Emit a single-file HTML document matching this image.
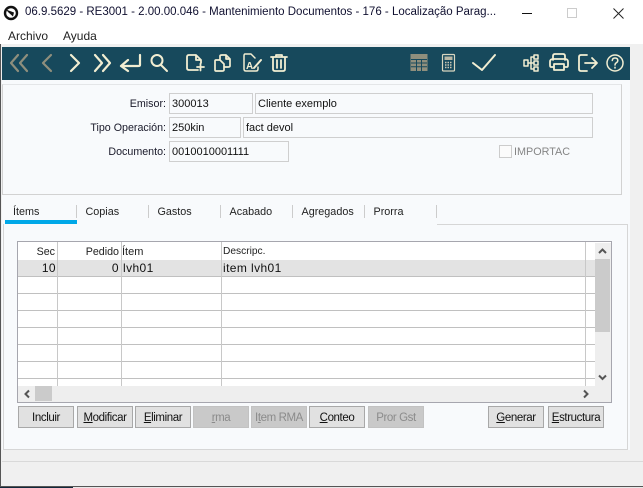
<!DOCTYPE html>
<html><head><meta charset="utf-8">
<style>
html,body{margin:0;padding:0;width:643px;height:488px;overflow:hidden;background:#f0f0f0}
body{position:relative;font-family:"Liberation Sans",sans-serif;font-size:11px;color:#111}
div,span{position:absolute;box-sizing:border-box;white-space:nowrap}
.lbl{text-align:right;width:160px;left:6px;height:14px;line-height:14px;color:#1a1a2a;font-size:10.700px}
.inp{border:1px solid #cfcfcf;background:#f8fafc;height:21px;line-height:21px;padding-left:2px;color:#111}
.tab{top:205px;height:14px;line-height:14px;color:#222;font-size:10.800px}
.sep{top:205px;width:1px;height:13px;background:#ccc}
.h{height:1px;left:18px;width:577px;background:#c0c0c0}
.v{width:1px;top:242px;height:144px;background:#c8c8c8}
.c{height:16px;line-height:16px;color:#111}
.d{font-size:12px;letter-spacing:.4px;line-height:17px}
.btn{top:406px;width:56px;height:22px;border:1px solid #a8a8a8;background:#e1e1e1;text-align:center;line-height:22px;font-size:11.500px;color:#111;letter-spacing:-.4px}
.dis{background:#c9c9c9;border-color:#c2c2c2;color:#8b8b8b}
u{text-decoration:underline}
</style></head><body>
<div style="left:0;top:0;width:643px;height:44px;background:#fff"></div>
<svg style="position:absolute;left:3px;top:5px" width="16" height="16" viewBox="0 0 16 16"><circle cx="8" cy="8" r="6" fill="#fff" stroke="#111" stroke-width="2.400"/><path d="M3 4.500L11 7.500L10 11.500L5 7Z" fill="#111"/></svg>
<div style="left:25px;top:5px;height:15px;line-height:15px;font-size:11.500px;color:#101030">06.9.5629 - RE3001 - 2.00.00.046 - Mantenimiento Documentos - 176 - Localização Parag...</div>
<svg style="position:absolute;left:515px;top:5px" width="115" height="16" viewBox="0 0 115 16"><path d="M7 8.500H17" stroke="#111"/><rect x="52.500" y="3.500" width="9" height="9" fill="none" stroke="#ccc"/><path d="M98.500 3.500L108.500 13.500M108.500 3.500L98.500 13.500" stroke="#222" fill="none"/></svg>
<div style="left:8px;top:29px;height:14px;line-height:14px;font-size:12px;color:#222">Archivo</div>
<div style="left:63px;top:29px;height:14px;line-height:14px;font-size:12px;color:#222">Ayuda</div>

<div style="left:2px;top:47px;width:628px;height:33px;background:#17495c"></div>
<svg style="position:absolute;left:0;top:47px" width="630" height="33" viewBox="0 47 630 33" fill="none" stroke="#f2eed2" stroke-width="2" stroke-linecap="round" stroke-linejoin="round">
<g stroke="#8f8f7d" stroke-width="2.200"><path d="M18 55L11 63L18 71M27 55L20 63L27 71"/><path d="M51 55L43 63L51 71"/></g>
<g stroke-width="2.200"><path d="M71 55L79 63L71 71"/><path d="M95 55L102 63L95 71M103 55L110 63L103 71"/><path d="M140 55V65Q140 66 138 66H122M128 60L121 66L128 71"/></g>
<circle cx="157" cy="60.500" r="5.500"/><path d="M161 65L167 71"/>
<path d="M198 70H189Q187 70 187 68V57Q187 55 189 55H196L201 60V63M196 55V60H201M197 67H204M200.500 63.500V70.500" stroke-width="1.800"/>
<path d="M220 60V56Q220 55 222 55H226L230 59V66Q230 67 228 67H225M226 55V59H230M216 60H220L224 64V70Q224 71 222 71H216Q215 71 215 70V61Q215 60 216 60Z" stroke-width="1.700"/>
<path d="M255 58L251 54H245Q244 54 244 56V69Q244 71 246 71H256Q258 71 258 69V67" stroke-width="1.500"/><text x="246" y="69" font-family="Liberation Sans" font-size="10" font-weight="bold" fill="#f2eed2" stroke="none">A</text><path d="M254 68L261 60" stroke-width="2"/>
<path d="M271 57H287M276 57V55H282V57M273 57V69Q273 71 275 71H283Q285 71 285 69V57M277 60V68M281 60V68" stroke-width="1.800"/>
<rect x="410.500" y="54" width="17" height="17" fill="#8f8f7d" stroke="none"/>
<path d="M411 59.500H427M411 63H427M411 66.700H427M416.500 59.500V71M421.500 59.500V71" stroke="#17495c" stroke-width="1" stroke-linecap="butt"/>
<rect x="442.500" y="54.500" width="12" height="16.500" rx="1" fill="#17495c" stroke="#d8d6c0" stroke-width="1.200"/><rect x="444.500" y="56.500" width="8" height="3.500" fill="#b9b8a6" stroke="none"/>
<path d="M445 62.500H452.500M445 65H452.500M445 67.500H452.500" stroke="#c9c8b4" stroke-width="1.400" stroke-dasharray="1.500 1" stroke-linecap="butt"/>
<path d="M473 63L482 70L495 55" stroke-width="2"/>
<g stroke-width="1.500"><rect x="524" y="60" width="4" height="6"/><rect x="534" y="55" width="4" height="4"/><rect x="534" y="61" width="4" height="4"/><rect x="534" y="67" width="4" height="4"/><path d="M528 63H534M531 57V69M531 57H534M531 69H534"/></g>
<path d="M553 60V56Q553 54 555 54H563Q565 54 565 56V60M553 67H551Q550 67 550 65V62Q550 59 553 59H565Q568 59 568 62V65Q568 67 567 67H565M554 64H564V70H554Z" stroke-width="1.800"/>
<path d="M587 55H581Q579 55 579 57V69Q579 71 581 71H587M585 63H597M592 58L597 63L592 68" stroke-width="1.800"/>
<circle cx="615" cy="63" r="8" stroke-width="1.500"/><path d="M612.300 60.500Q612.500 58 615 58Q617.800 58 617.800 60.500Q617.800 62 616 63Q615 63.700 615 65" stroke-width="1.500"/><path d="M615 67.200V68" stroke-width="1.500"/>
</svg>

<div style="left:2px;top:80px;width:628px;height:370px;background:#f8fafc"></div>
<div style="left:2px;top:84px;width:620px;height:111px;border:1px solid #d2d2d2;border-top-color:#e4e6e8"></div>

<div class="lbl" style="top:97px">Emisor:</div>
<div class="lbl" style="top:121px">Tipo Operación:</div>
<div class="lbl" style="top:145px">Documento:</div>
<div class="inp" style="left:169px;top:93px;width:84px">300013</div>
<div class="inp" style="left:255px;top:93px;width:338px">Cliente exemplo</div>
<div class="inp" style="left:169px;top:117px;width:72px">250kin</div>
<div class="inp" style="left:243px;top:117px;width:350px">fact devol</div>
<div class="inp" style="left:169px;top:141px;width:120px">0010010001111</div>
<div style="left:499px;top:145px;width:13px;height:13px;border:1px solid #ccc;background:#fbfbfb"></div>
<div style="left:514px;top:145px;height:14px;line-height:14px;font-size:10.800px;color:#858585">IMPORTAC</div>

<div class="tab" style="left:13px">Ítems</div>
<div class="tab" style="left:85.500px">Copias</div>
<div class="tab" style="left:157.500px">Gastos</div>
<div class="tab" style="left:229.500px">Acabado</div>
<div class="tab" style="left:301.500px">Agregados</div>
<div class="tab" style="left:373.500px">Prorra</div>
<div class="sep" style="left:76px"></div><div class="sep" style="left:148px"></div><div class="sep" style="left:220px"></div><div class="sep" style="left:292px"></div><div class="sep" style="left:364px"></div><div class="sep" style="left:436px"></div>

<div style="left:3px;top:224px;width:625px;height:226px;border:1px solid #d6d6d6;border-top:0"></div>
<div style="left:437px;top:224px;width:191px;height:1px;background:#d6d6d6"></div>
<div style="left:5px;top:220px;width:72px;height:4px;background:#00a8e8"></div>

<div style="left:17px;top:241px;width:595px;height:162px;border:1px solid #a6a6ae;background:#fff"></div>
<div style="left:18px;top:260px;width:577px;height:16px;background:#e3e3e3"></div>
<div class="h" style="top:276px"></div><div class="h" style="top:293px"></div><div class="h" style="top:310px"></div><div class="h" style="top:327px"></div><div class="h" style="top:344px"></div><div class="h" style="top:361px"></div><div class="h" style="top:378px"></div>
<div class="v" style="left:57px"></div><div class="v" style="left:121px"></div><div class="v" style="left:221px"></div><div class="v" style="left:585px"></div>
<div class="c" style="left:18px;width:37px;top:244px;text-align:right;color:#222;font-size:10.700px">Sec</div>
<div class="c" style="left:58px;width:61px;top:244px;text-align:right;color:#222;font-size:10.700px">Pedido</div>
<div class="c" style="left:122px;top:244px;color:#222">Ítem</div>
<div class="c" style="left:223px;top:244px;font-size:10.200px;color:#222">Descripc.</div>
<div class="c d" style="left:18px;width:38px;top:260px;text-align:right">10</div>
<div class="c d" style="left:58px;width:61px;top:260px;text-align:right">0</div>
<div class="c d" style="left:123px;top:260px">lvh01</div>
<div class="c d" style="left:223px;top:260px">item lvh01</div>

<div style="left:595px;top:243px;width:16px;height:159px;background:#eee"></div>
<div style="left:595px;top:259px;width:15px;height:73px;background:#cbcbcb"></div>
<div style="left:18px;top:386px;width:593px;height:16px;background:#eee"></div>
<div style="left:35px;top:386px;width:17px;height:15px;background:#cbcbcb"></div>
<svg style="position:absolute;left:18px;top:243px" width="593" height="159" viewBox="18 243 593 159" fill="none" stroke="#555" stroke-width="2"><path d="M599 253L602.500 249.500L606 253"/><path d="M599 375.500L602.500 379L606 375.500"/><path d="M29 390.500L25.500 394L29 397.500"/><path d="M584 390.500L587.500 394L584 397.500"/></svg>

<div class="btn" style="left:18px">Incluir</div>
<div class="btn" style="left:77px"><u>M</u>odificar</div>
<div class="btn" style="left:135px"><u>E</u>liminar</div>
<div class="btn dis" style="left:193px"><u>r</u>ma</div>
<div class="btn dis" style="left:251px">I<u>t</u>em RMA</div>
<div class="btn" style="left:309px"><u>C</u>onteo</div>
<div class="btn dis" style="left:368px">Pror Gst</div>
<div class="btn" style="left:488px"><u>G</u>enerar</div>
<div class="btn" style="left:548px"><u>E</u>structura</div>

<div style="left:2px;top:461px;width:641px;height:1px;background:#d9d9d9"></div>
<div style="left:0;top:486px;width:643px;height:1px;background:#555"></div>
<div style="left:0;top:487px;width:643px;height:1px;background:#e8e8e8"></div>
<div style="left:0;top:487px;width:73px;height:1px;background:#12283a"></div>
<div style="left:0;top:44px;width:1px;height:442px;background:#555"></div>
</body></html>
